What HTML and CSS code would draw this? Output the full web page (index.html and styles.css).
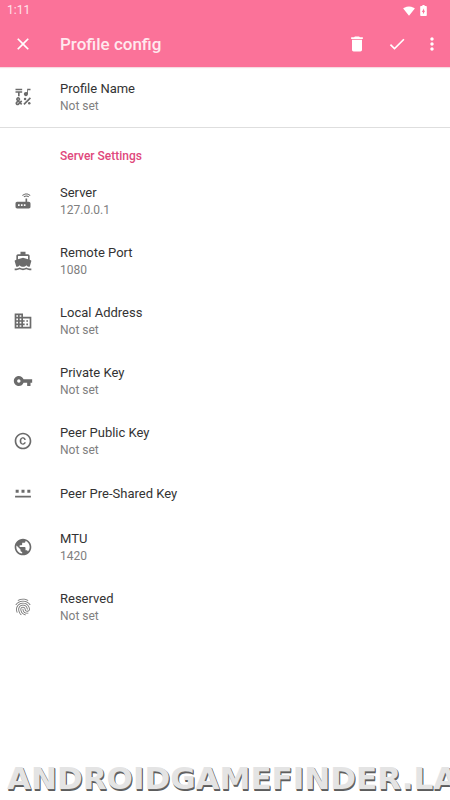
FILE: index.html
```
<!DOCTYPE html>
<html lang="en">
<head>
<meta charset="utf-8">
<meta name="viewport" content="width=device-width, initial-scale=1">
<title>Profile config</title>
<link rel="stylesheet" href="styles.css">
</head>
<body>
<header class="top">
  <div class="status">
    <span class="clock">1:11</span>
    <svg class="wifi" viewBox="0 0 24 24" aria-hidden="true"><path d="M12.01 21.49 23.64 7c-.45-.34-4.93-4-11.64-4C5.28 3 .81 6.66.36 7l11.63 14.49.01.01.01-.01z"/></svg>
    <svg class="battery" viewBox="0 0 12 20" aria-hidden="true"><path fill-rule="evenodd" d="M10.7 2H8V0H4v2H1.3C.6 2 0 2.600 0 3.300v15.400C0 19.400.6 20 1.300 20h9.400c.7 0 1.300-.6 1.300-1.300V3.300C12 2.600 11.400 2 10.700 2zM5 17v-4.500H3L7 6v4.500h2L5 17z"/></svg>
  </div>
  <div class="toolbar">
    <button class="tool" aria-label="Close"><svg viewBox="0 0 24 24"><path d="M19 6.410 17.590 5 12 10.590 6.410 5 5 6.410 10.590 12 5 17.590 6.410 19 12 13.410 17.590 19 19 17.590 13.410 12z"/></svg></button>
    <h1>Profile config</h1>
    <button class="tool" aria-label="Delete"><svg viewBox="0 0 24 24"><path d="M6 19c0 1.100.9 2 2 2h8c1.100 0 2-.9 2-2V7H6v12zM19 4h-3.500l-1-1h-5l-1 1H5v2h14V4z"/></svg></button>
    <button class="tool" aria-label="Apply"><svg viewBox="0 0 24 24"><path d="M9 16.170 4.830 12l-1.420 1.410L9 19 21 7l-1.410-1.410z"/></svg></button>
    <button class="tool more" aria-label="More options"><svg viewBox="0 0 24 24"><path d="M12 8c1.100 0 2-.9 2-2s-.9-2-2-2-2 .9-2 2 .9 2 2 2zm0 2c-1.100 0-2 .9-2 2s.9 2 2 2 2-.9 2-2-.9-2-2-2zm0 6c-1.100 0-2 .9-2 2s.9 2 2 2 2-.9 2-2-.9-2-2-2z"/></svg></button>
  </div>
</header>
<main>
  <section class="general">
    <button class="row">
      <svg viewBox="0 0 24 24"><path d="M3 2h8v2H3zM6 11h2V7h3V5H3v2h3zM12.404 20.182l7.778-7.778 1.414 1.414-7.778 7.778zM15.500 11c1.380 0 2.500-1.120 2.500-2.500V4h3V2h-4v4.510c-.42-.32-.93-.51-1.500-.51-1.380 0-2.500 1.120-2.500 2.500s1.120 2.500 2.500 2.500zM9.740 15.960l-1.410 1.410-.71-.71.35-.35c.98-.98.98-2.560 0-3.540-.49-.49-1.130-.73-1.770-.73s-1.280.24-1.770.73c-.98.98-.98 2.560 0 3.540l.35.35-1.060 1.060c-.98.98-.98 2.560 0 3.540.5.5 1.140.74 1.780.74s1.280-.24 1.770-.73l1.060-1.060 1.410 1.410 1.410-1.410-1.410-1.410 1.410-1.410-1.410-1.430zM5.850 14.200c.12-.12.26-.15.35-.15s.23.03.35.15c.19.2.19.51 0 .71l-.35.35-.35-.36c-.19-.19-.19-.51 0-.7zm0 5.650c-.12.12-.26.15-.35.15s-.23-.03-.35-.15c-.19-.19-.19-.51 0-.71l1.060-1.060.71.71-1.070 1.060z"/><circle cx="14.500" cy="14.500" r="1.500"/><circle cx="19.500" cy="19.500" r="1.500"/></svg>
      <span class="text"><span class="name">Profile Name</span><span class="value">Not set</span></span>
    </button>
  </section>
  <section>
    <h2>Server Settings</h2>
    <button class="row">
      <svg viewBox="0 0 24 24"><path d="M20.200 5.900l.8-.8C19.600 3.700 17.800 3 16 3s-3.600.7-5 2.100l.8.8C13 4.800 14.500 4.200 16 4.200s3 .6 4.200 1.700zm-.9.8c-.9-.9-2.100-1.400-3.300-1.400s-2.400.5-3.300 1.400l.8.8c.7-.7 1.600-1 2.500-1 .9 0 1.800.3 2.500 1l.8-.8zM19 13h-2V9h-2v4H5c-1.100 0-2 .9-2 2v4c0 1.100.9 2 2 2h14c1.100 0 2-.9 2-2v-4c0-1.100-.9-2-2-2zM8 18H6v-2h2v2zm3.500 0h-2v-2h2v2zm3.500 0h-2v-2h2v2z"/></svg>
      <span class="text"><span class="name">Server</span><span class="value">127.0.0.1</span></span>
    </button>
    <button class="row">
      <svg viewBox="0 0 24 24"><path d="M20 21c-1.390 0-2.780-.47-4-1.320-2.440 1.710-5.560 1.710-8 0C6.780 20.530 5.390 21 4 21H2v2h2c1.380 0 2.740-.35 4-.99 2.520 1.290 5.480 1.290 8 0 1.260.65 2.620.99 4 .99h2v-2h-2zM3.950 19H4c1.600 0 3.020-.88 4-2 .98 1.120 2.400 2 4 2s3.020-.88 4-2c.98 1.120 2.400 2 4 2h.05l1.890-6.680c.08-.26.06-.54-.06-.78s-.34-.42-.6-.5L20 10.620V6c0-1.100-.9-2-2-2h-3V1H9v3H6c-1.100 0-2 .9-2 2v4.620l-1.290.42c-.26.08-.48.26-.6.5s-.15.52-.06.78L3.950 19zM6 6h12v3.970L12 8 6 9.970V6z"/></svg>
      <span class="text"><span class="name">Remote Port</span><span class="value">1080</span></span>
    </button>
    <button class="row">
      <svg viewBox="0 0 24 24"><path d="M12 7V3H2v18h20V7H12zM6 19H4v-2h2v2zm0-4H4v-2h2v2zm0-4H4V9h2v2zm0-4H4V5h2v2zm4 12H8v-2h2v2zm0-4H8v-2h2v2zm0-4H8V9h2v2zm0-4H8V5h2v2zm10 12h-8v-2h2v-2h-2v-2h2v-2h-2V9h8v10zm-2-8h-2v2h2v-2zm0 4h-2v2h2v-2z"/></svg>
      <span class="text"><span class="name">Local Address</span><span class="value">Not set</span></span>
    </button>
    <button class="row">
      <svg viewBox="0 0 24 24"><path d="M12.650 10C11.830 7.670 9.610 6 7 6c-3.310 0-6 2.690-6 6s2.690 6 6 6c2.610 0 4.830-1.670 5.650-4H17v4h4v-4h2v-4H12.650zM7 14c-1.100 0-2-.9-2-2s.9-2 2-2 2 .9 2 2-.9 2-2 2z"/></svg>
      <span class="text"><span class="name">Private Key</span><span class="value">Not set</span></span>
    </button>
    <button class="row">
      <svg viewBox="0 0 24 24"><path d="M10.080 10.860c.05-.33.16-.62.3-.87s.34-.46.59-.62c.24-.15.54-.22.91-.23.23.01.44.05.63.13.2.09.38.21.52.36s.25.33.34.53.13.42.14.64h1.790c-.02-.47-.11-.9-.28-1.290s-.4-.73-.7-1.010-.66-.5-1.080-.66-.88-.23-1.390-.23c-.65 0-1.220.11-1.700.34s-.88.53-1.200.92-.56.84-.71 1.360S8 11.290 8 11.870v.27c0 .58.08 1.120.23 1.640s.39.97.71 1.350.72.69 1.200.91 1.050.34 1.700.34c.47 0 .91-.08 1.320-.23s.77-.36 1.080-.63.56-.58.74-.94.29-.74.3-1.150h-1.790c-.01.21-.06.4-.15.58s-.21.33-.36.46-.32.23-.52.3c-.19.07-.39.09-.6.1-.36-.01-.66-.08-.89-.23-.25-.16-.45-.37-.59-.62s-.25-.55-.3-.88-.08-.67-.08-1v-.27c0-.35.03-.68.08-1.010zM12 2C6.480 2 2 6.480 2 12s4.480 10 10 10 10-4.480 10-10S17.520 2 12 2zm0 18c-4.410 0-8-3.590-8-8s3.590-8 8-8 8 3.590 8 8-3.590 8-8 8z"/></svg>
      <span class="text"><span class="name">Peer Public Key</span><span class="value">Not set</span></span>
    </button>
    <button class="row single">
      <svg viewBox="0 0 24 24"><path d="M2.500 14h19v2.200h-19zM3.200 7h3.600v3.600H3.200zM10.200 7h3.600v3.600h-3.600zM17.200 7h3.600v3.600h-3.600z"/></svg>
      <span class="text"><span class="name">Peer Pre-Shared Key</span></span>
    </button>
    <button class="row">
      <svg viewBox="0 0 24 24"><path d="M12 2C6.480 2 2 6.480 2 12s4.480 10 10 10 10-4.480 10-10S17.520 2 12 2zm-1 17.930c-3.950-.49-7-3.850-7-7.930 0-.62.08-1.210.21-1.790L9 15v1c0 1.100.9 2 2 2v1.930zm6.900-2.540c-.26-.81-1-1.390-1.900-1.390h-1v-3c0-.55-.45-1-1-1H8v-2h2c.55 0 1-.45 1-1V7h2c1.100 0 2-.9 2-2v-.41c2.930 1.190 5 4.060 5 7.410 0 2.080-.8 3.970-2.100 5.390z"/></svg>
      <span class="text"><span class="name">MTU</span><span class="value">1420</span></span>
    </button>
    <button class="row">
      <svg viewBox="0 0 24 24"><path d="M17.810 4.470c-.08 0-.16-.02-.23-.06C15.660 3.420 14 3 12.010 3c-1.980 0-3.860.47-5.570 1.410-.24.13-.54.04-.68-.2-.13-.24-.04-.55.2-.68C7.820 2.520 9.860 2 12.010 2c2.130 0 3.990.47 6.030 1.520.25.13.34.43.21.67-.09.18-.26.28-.44.28zM3.500 9.720c-.1 0-.2-.03-.29-.09-.23-.16-.28-.47-.12-.7.99-1.400 2.250-2.500 3.750-3.270C9.980 4.040 14 4.030 17.150 5.650c1.500.77 2.760 1.860 3.750 3.250.16.22.11.54-.12.7-.23.16-.54.11-.7-.12-.9-1.260-2.040-2.250-3.390-2.940-2.870-1.470-6.540-1.470-9.400.01-1.360.7-2.500 1.700-3.400 2.960-.08.14-.23.21-.39.21zm6.250 12.070c-.13 0-.26-.05-.35-.15-.87-.87-1.340-1.430-2.010-2.640-.69-1.230-1.050-2.730-1.050-4.340 0-2.970 2.540-5.390 5.660-5.390s5.660 2.420 5.660 5.390c0 .28-.22.5-.5.5s-.5-.22-.5-.5c0-2.420-2.090-4.390-4.660-4.390-2.570 0-4.660 1.970-4.660 4.390 0 1.440.32 2.770.93 3.850.64 1.150 1.080 1.640 1.850 2.420.19.2.19.51 0 .71-.11.1-.24.15-.37.15zm7.170-1.850c-1.190 0-2.240-.3-3.100-.89-1.490-1.010-2.380-2.650-2.380-4.390 0-.28.22-.5.5-.5s.5.22.5.5c0 1.410.72 2.740 1.940 3.560.71.48 1.540.71 2.540.71.24 0 .64-.03 1.040-.1.27-.05.53.13.58.41.05.27-.13.53-.41.58-.57.11-1.070.12-1.210.12zM14.910 22c-.04 0-.09-.01-.13-.02-1.590-.44-2.630-1.030-3.720-2.100-1.400-1.390-2.170-3.240-2.170-5.220 0-1.620 1.380-2.940 3.080-2.940 1.700 0 3.080 1.320 3.080 2.940 0 1.070.93 1.940 2.080 1.940s2.080-.87 2.080-1.940c0-3.770-3.250-6.830-7.250-6.830-2.840 0-5.440 1.580-6.610 4.030-.39.81-.59 1.760-.59 2.800 0 .78.07 2.010.67 3.610.1.26-.03.55-.29.64-.26.1-.55-.04-.64-.29-.49-1.310-.73-2.610-.73-3.960 0-1.200.23-2.290.68-3.240 1.330-2.790 4.280-4.600 7.510-4.600 4.550 0 8.250 3.510 8.250 7.830 0 1.620-1.380 2.940-3.080 2.940s-3.080-1.320-3.080-2.940c0-1.070-.93-1.940-2.080-1.940s-2.080.87-2.080 1.940c0 1.710.66 3.310 1.870 4.510.95.94 1.860 1.460 3.270 1.850.27.07.42.35.35.61-.05.23-.26.38-.47.38z"/></svg>
      <span class="text"><span class="name">Reserved</span><span class="value">Not set</span></span>
    </button>
  </section>
</main>
<footer class="mark">ANDROIDGAMEFINDER.LA</footer>
</body>
</html>
```
FILE: styles.css
```
* { box-sizing: border-box; }
body {
  margin: 0;
  min-height: 100vh;
  display: flex;
  flex-direction: column;
  background: #fff;
  color: #333;
  font-family: Roboto, sans-serif;
  overflow-x: hidden;
}
svg { display: block; fill: currentColor; flex: none; }
button {
  border: 0;
  padding: 0;
  background: none;
  color: inherit;
  font: inherit;
  text-align: left;
}
.top { background: #fb7299; color: #fff; box-shadow: 0 1px 1px #f6dce2; }
.status { display: flex; align-items: center; height: 21px; padding: 0 23px 0 7px; }
.clock { flex: 1; font-size: 12px; line-height: 21px; color: #ffe3ea; }
.wifi { width: 12px; height: 12px; margin-right: 5px; }
.battery { width: 7px; height: 11px; }
.toolbar { display: flex; align-items: center; height: 46px; padding: 0 4px 0 3px; }
.tool { width: 40px; height: 40px; display: grid; place-items: center; }
.tool svg { width: 20px; height: 20px; }
.tool.more { width: 29px; }
h1 { flex: 1; margin: 0; padding-left: 17px; font-size: 17px; line-height: 24px; font-weight: 500; color: #ffe9ee; }
.general { border-bottom: 1px solid #dedede; }
h2 { margin: 0; padding: 18px 0 5px 60px; font-size: 12px; line-height: 20px; font-weight: 500; color: #e0487c; }
.row { display: flex; align-items: center; width: 100%; height: 60px; padding-left: 13px; }
.row.single { height: 46px; }
.row svg { width: 20px; height: 20px; margin-right: 27px; color: #6b6b6b; }
.name, .value { display: block; }
.name { font-size: 13px; line-height: 18px; }
.value { font-size: 12px; line-height: 16px; color: #808080; }
.mark {
  margin-top: auto;
  padding: 0 0 3px 7px;
  font: bold 31px/38px "DejaVu Sans", sans-serif;
  white-space: nowrap;
  color: #e4e4e4;
  text-shadow: 1px 1px #666, 1px 2px #5c5c5c;
}
```
